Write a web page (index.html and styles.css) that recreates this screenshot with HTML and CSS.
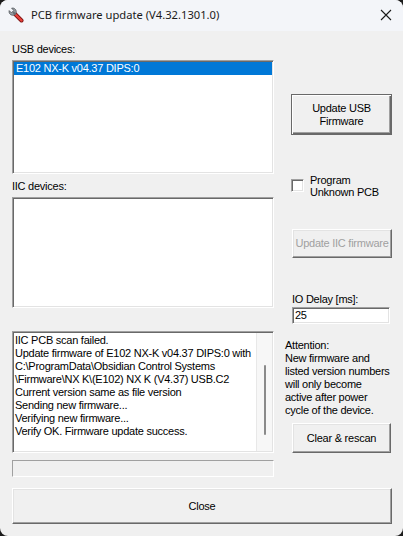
FILE: index.html
```html
<!DOCTYPE html>
<html lang="en">
<head>
<meta charset="UTF-8" />
<title>PCB firmware update (V4.32.1301.0)</title>
<link rel="stylesheet" href="styles.css">
</head>
<body>

<div class="window">
  <div class="titlebar">
    <svg class="app-icon" width="16" height="16" viewBox="0 0 16 16">
      <line x1="6.5" y1="6.5" x2="13.5" y2="13.5" stroke="#7a1010" stroke-width="4" stroke-linecap="round"/>
      <line x1="6.5" y1="6.5" x2="13.5" y2="13.5" stroke="#e8413a" stroke-width="2.4" stroke-linecap="round"/>
      <path d="M1.2 3.6 L3.4 5.8 L5.8 3.4 L3.6 1.2 A3.6 3.6 0 1 1 1.2 3.6 Z" fill="#9aa0a6" stroke="#50555a" stroke-width="0.8"/>
      <line x1="5" y1="5" x2="7.6" y2="7.6" stroke="#6b7075" stroke-width="2"/>
    </svg>
    <span class="title">PCB firmware update (V4.32.1301.0)</span>
    <svg class="close-x" width="12" height="12" viewBox="0 0 12 12">
      <path d="M1 1 L11 11 M11 1 L1 11" stroke="#1a1a1a" stroke-width="1.1"/>
    </svg>
  </div>

  <div class="client">
    <div class="main">
      <div class="left">
        <div class="label usb-label">USB devices:</div>
        <div class="listbox usb-list">
          <div class="item selected">E102 NX-K v04.37 DIPS:0</div>
        </div>

        <div class="label iic-label">IIC devices:</div>
        <div class="listbox iic-list"></div>

        <div class="listbox log">
          <div class="log-text">
            <div>IIC PCB scan failed.</div>
            <div>Update firmware of E102 NX-K v04.37 DIPS:0 with</div>
            <div>C:\ProgramData\Obsidian Control Systems</div>
            <div>\Firmware\NX K\(E102) NX K (V4.37) USB.C2</div>
            <div>Current version same as file version</div>
            <div>Sending new firmware...</div>
            <div>Verifying new firmware...</div>
            <div>Verify OK. Firmware update success.</div>
          </div>
          <div class="scrollbar"><div class="thumb"></div></div>
        </div>
      </div>

      <div class="right">
        <button class="btn usb-btn default">Update USB<br>Firmware</button>

        <label class="check-row">
          <span class="checkbox"></span>
          <span class="check-text">Program<br>Unknown PCB</span>
        </label>

        <button class="btn iic-btn" disabled>Update IIC firmware</button>

        <div class="label io-label">IO Delay [ms]:</div>
        <div class="textbox">25</div>

        <div class="attention">
          Attention:<br>
          New firmware and<br>
          listed version numbers<br>
          will only become<br>
          active after power<br>
          cycle of the device.
        </div>

        <button class="btn clear-btn">Clear &amp; rescan</button>
      </div>
    </div>

    <div class="progress"></div>
    <button class="btn close-btn">Close</button>
  </div>
</div>

</body>
</html>
```

FILE: styles.css
```css
* { margin:0; padding:0; box-sizing:border-box; }
body {
  background:#1c1c1c;
  font-family:'Liberation Sans', Arial, sans-serif;
  font-size:11px;
  letter-spacing:-0.25px;
  color:#000;
}
.window {
  width:403px; height:536px;
  border-radius:8px; overflow:hidden;
  background:#f0f0f0;
  display:flex; flex-direction:column;
}

/* title bar */
.titlebar {
  height:31px; flex:none;
  background:#f3f5f9;
  display:flex; align-items:center;
  padding-left:8px;
}
.app-icon { flex:none; margin-top:-1px; }
.title {
  margin-left:7px;
  font-family:'Noto Sans', 'Open Sans', sans-serif;
  font-size:11.2px; letter-spacing:0; color:#1a1a1a;
  margin-top:-2px;
}
.close-x { margin-left:auto; margin-right:11px; margin-top:-2px; }

/* client area */
.client {
  flex:1;
  padding:0 11px 12px 12px;
  display:flex; flex-direction:column;
}
.main { display:flex; }
.left { width:262px; display:flex; flex-direction:column; }
.right { width:107px; margin-left:11px; display:flex; flex-direction:column; white-space:nowrap; }

.label { line-height:13px; }
.usb-label { margin-top:12px; }
.iic-label { margin-top:6px; }

.listbox {
  background:#fff;
  border-top:1px solid #a0a0a0; border-left:1px solid #a0a0a0;
  border-bottom:1px solid #fff; border-right:1px solid #fff;
  box-shadow:inset 1px 1px 0 #696969, inset -1px -1px 0 #e3e3e3;
  padding:1px;
}
.usb-list { margin-top:4px; height:114px; }
.iic-list { margin-top:4px; height:111px; }
.item { line-height:13px; padding-left:2px; }
.item.selected { background:#0078d7; color:#fff; }

.log {
  margin-top:23px; height:122px;
  display:flex;
}
.log-text { flex:1; line-height:13px; padding:1px 0 0 1px; white-space:nowrap; overflow:hidden; }
.scrollbar {
  width:16px; flex:none;
  border-left:1px solid #e8e8e8;
  background:#f7f7f7;
  position:relative;
}
.thumb {
  position:absolute; left:7px; top:32px;
  width:2px; height:70px;
  background:#8a8a8a; border-radius:1px;
}

/* buttons */
.btn {
  font-family:'Liberation Sans', Arial, sans-serif;
  font-size:11px; line-height:13px; color:#000;
  letter-spacing:-0.25px;
  background:#f0f0f0;
  border-top:1px solid #fff; border-left:1px solid #fff;
  border-bottom:1px solid #696969; border-right:1px solid #696969;
  box-shadow:inset -1px -1px 0 #a0a0a0, inset 1px 1px 0 #e3e3e3;
  white-space:nowrap;
}
.btn.default {
  border:1px solid #696969;
  box-shadow:inset 1px 1px 0 #fff, inset -1px -1px 0 #696969, inset -2px -2px 0 #a0a0a0;
}
.btn:disabled { color:#a0a0a0; }
.usb-btn { margin:63px 0 0 6px; width:101px; height:41px; }
.iic-btn { margin:31px 0 0 7px; width:100px; height:29px; padding:0; }
.clear-btn { margin:6px 0 0 7px; width:99px; height:30px; }

.check-row { margin:39px 0 0 6px; display:flex; align-items:center; line-height:12px; }
.checkbox {
  width:13px; height:13px; flex:none;
  background:#fff;
  border-top:1px solid #a0a0a0; border-left:1px solid #a0a0a0;
  border-bottom:1px solid #fff; border-right:1px solid #fff;
  box-shadow:inset 1px 1px 0 #696969, inset -1px -1px 0 #e3e3e3;
  margin-top:-1px;
}
.check-text { margin-left:6px; }

.io-label { margin:35px 0 0 7px; }
.textbox {
  margin:1px 0 0 7px; width:98px; height:17px;
  background:#fff;
  border-top:1px solid #a0a0a0; border-left:1px solid #a0a0a0;
  border-bottom:1px solid #fff; border-right:1px solid #fff;
  box-shadow:inset 1px 1px 0 #696969, inset -1px -1px 0 #e3e3e3;
  padding:1px 0 0 2px; line-height:13px;
}
.attention { margin-top:15px; line-height:13px; }

.progress {
  margin-top:7px; width:262px; height:17px;
  border-top:1px solid #a0a0a0; border-left:1px solid #a0a0a0;
  border-bottom:1px solid #fff; border-right:1px solid #fff;
  background:#f0f0f0;
}
.close-btn { margin-top:11px; width:380px; height:36px; }
```
